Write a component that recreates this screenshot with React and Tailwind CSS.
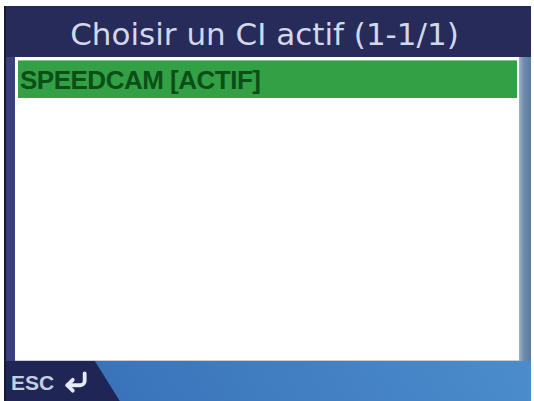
import React from 'react';
import { CornerDownLeft } from 'lucide-react';

const App = () => {
  return (
    <div className="w-[534px] h-[401px] bg-white pt-[6px] pl-[4px] pr-[3px] overflow-hidden">
      <div className="flex flex-col h-full border-l-2 border-[#171a36] bg-[#2a2f60]">
        {/* title bar */}
        <div className="h-[51px] flex items-center justify-center bg-[#262b5a]">
          <span className="text-[31px] leading-none text-[#d3d7ec] font-['DejaVu_Sans',sans-serif] pt-[6px] pr-[8px]">
            Choisir un CI actif (1-1/1)
          </span>
        </div>

        {/* list area */}
        <div className="flex h-[304px]">
          <div className="w-[9px] bg-[#3a3f7e]" />
          <div className="flex-1 bg-white pt-[3px] pl-[3px] pr-[2px] border-b border-[#c9cdd8]">
            <div className="h-[38px] bg-[#34a046] border-t border-[#7fcb8a] flex items-center pl-[2px]">
              <span className="text-[26px] leading-none font-bold text-[#0b4f17] font-['Liberation_Sans',Arial,sans-serif] tracking-[-0.5px]">
                SPEEDCAM [ACTIF]
              </span>
            </div>
          </div>
          <div className="w-[12px] bg-[linear-gradient(90deg,#9fb3c8_0,#6f8cad_40%,#5a7ba0_100%)]" />
        </div>

        {/* bottom bar */}
        <div className="h-[40px] flex items-center gap-[9px] pl-[5px] bg-[linear-gradient(58deg,#1f2554_0,#1f2554_96px,#3a73ba_97px,#4b8dcc_100%)]">
          <span className="text-[21px] leading-none font-bold text-[#c5cde0] font-['Liberation_Sans',Arial,sans-serif] pt-[3px]">
            ESC
          </span>
          <CornerDownLeft size={26} strokeWidth={3.5} className="text-[#e6ebf5] mt-[1px]" />
        </div>
      </div>
    </div>
  );
};

export default App;
